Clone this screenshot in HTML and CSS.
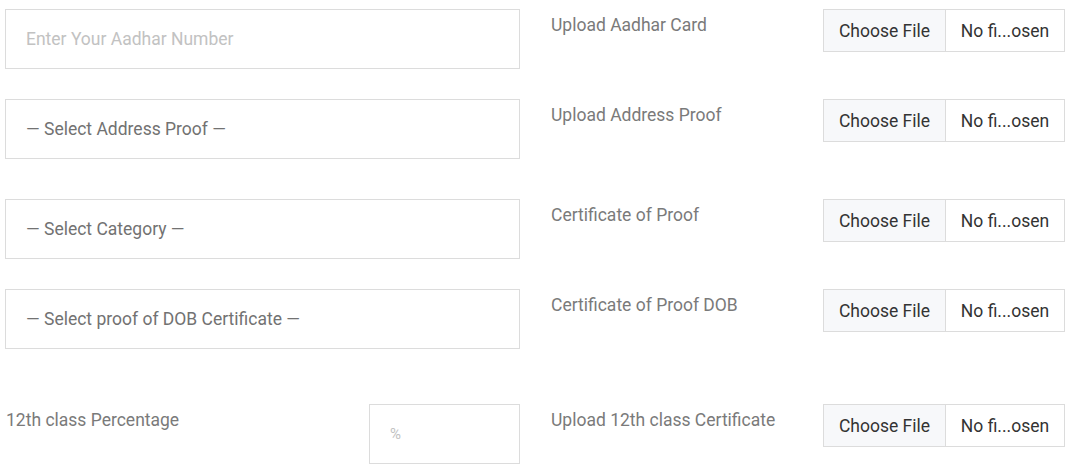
FILE: index.html
```html
<!DOCTYPE html>
<html lang="en">
<head>
<meta charset="utf-8">
<title>Documents</title>
<link rel="stylesheet" href="styles.css">
</head>
<body>
<form class="form">
  <div class="row r1">
    <div class="field"><input class="control" type="text" placeholder="Enter Your Aadhar Number"></div>
    <label class="label">Upload Aadhar Card</label>
    <div class="file"><span class="file-btn">Choose File</span><span class="file-name">No fi...osen</span></div>
  </div>
  <div class="row r2">
    <div class="field"><div class="control select">— Select Address Proof —</div></div>
    <label class="label">Upload Address Proof</label>
    <div class="file"><span class="file-btn">Choose File</span><span class="file-name">No fi...osen</span></div>
  </div>
  <div class="row r3">
    <div class="field"><div class="control select">— Select Category —</div></div>
    <label class="label">Certificate of Proof</label>
    <div class="file"><span class="file-btn">Choose File</span><span class="file-name">No fi...osen</span></div>
  </div>
  <div class="row r4">
    <div class="field"><div class="control select">— Select proof of DOB Certificate —</div></div>
    <label class="label">Certificate of Proof DOB</label>
    <div class="file"><span class="file-btn">Choose File</span><span class="file-name">No fi...osen</span></div>
  </div>
  <div class="row r5">
    <div class="field pct-field">
      <label class="label pct-label">12th class Percentage</label>
      <input class="control pct" type="text" placeholder="%">
    </div>
    <label class="label">Upload 12th class Certificate</label>
    <div class="file"><span class="file-btn">Choose File</span><span class="file-name">No fi...osen</span></div>
  </div>
</form>
</body>
</html>
```

FILE: styles.css
```css
* { box-sizing: border-box; }
html, body { margin: 0; padding: 0; background: #fff; }
body {
  font-family: Roboto, "Liberation Sans", sans-serif;
  font-size: 17.5px;
  color: #777;
}
.form {
  padding: 9px 0 0 5px;
}
.row {
  display: grid;
  grid-template-columns: 515px 303px 242px;
  align-items: start;
}
.r1 { margin-bottom: 30px; }
.r2 { margin-bottom: 40px; }
.r3 { margin-bottom: 30px; }
.r4 { margin-bottom: 55px; }

.control {
  display: flex;
  align-items: center;
  width: 100%;
  height: 60px;
  padding: 0 20px;
  border: 1px solid #dcdcdc;
  background: #fff;
  font: inherit;
  color: #727272;
  outline: none;
}
.control::placeholder { color: #c2c2c2; }

.label {
  display: block;
  line-height: 32px;
  color: #7a7a7a;
}
.row > .label { padding-left: 31px; }

.file {
  display: flex;
  height: 43px;
  border: 1px solid #dcdcdc;
  color: #333;
}
.file-btn {
  display: flex;
  align-items: center;
  justify-content: center;
  width: 122px;
  background: #f7f8fa;
  border-right: 1px solid #dcdcdc;
}
.file-name {
  display: flex;
  align-items: center;
  justify-content: center;
  flex: 1;
  background: #fff;
}

.pct-field {
  display: flex;
  justify-content: space-between;
  align-items: flex-start;
}
.pct-label { padding-left: 1px; }
.pct {
  width: 151px;
  padding: 0 20px;
  font-size: 15px;
}
```
